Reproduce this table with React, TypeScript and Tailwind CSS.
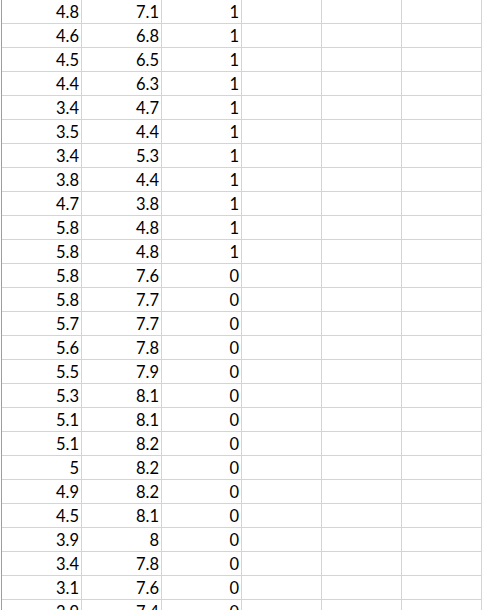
const rows: [string, string, string][] = [
  ["4.8", "7.1", "1"],
  ["4.6", "6.8", "1"],
  ["4.5", "6.5", "1"],
  ["4.4", "6.3", "1"],
  ["3.4", "4.7", "1"],
  ["3.5", "4.4", "1"],
  ["3.4", "5.3", "1"],
  ["3.8", "4.4", "1"],
  ["4.7", "3.8", "1"],
  ["5.8", "4.8", "1"],
  ["5.8", "4.8", "1"],
  ["5.8", "7.6", "0"],
  ["5.8", "7.7", "0"],
  ["5.7", "7.7", "0"],
  ["5.6", "7.8", "0"],
  ["5.5", "7.9", "0"],
  ["5.3", "8.1", "0"],
  ["5.1", "8.1", "0"],
  ["5.1", "8.2", "0"],
  ["5", "8.2", "0"],
  ["4.9", "8.2", "0"],
  ["4.5", "8.1", "0"],
  ["3.9", "8", "0"],
  ["3.4", "7.8", "0"],
  ["3.1", "7.6", "0"],
  ["2.9", "7.4", "0"],
];

function Cell({ value }: { value?: string }) {
  return (
    <div className="h-[24px] w-[80px] shrink-0 border-b border-r border-[#d4d4d4] pr-[2px] text-right leading-[24px] text-[16.5px] text-black">
      {value}
    </div>
  );
}

export default function App() {
  return (
    <div
      className="flex h-[610px] w-[482px] overflow-hidden bg-white"
      style={{ fontFamily: "Lato, 'Open Sans', sans-serif" }}
    >
      {/* row header edge */}
      <div className="ml-px w-px shrink-0 bg-[#9e9e9e]" />

      {/* sheet cells */}
      <div className="flex flex-col">
        {rows.map((r, i) => (
          <div key={i} className="flex">
            <Cell value={r[0]} />
            <Cell value={r[1]} />
            <Cell value={r[2]} />
            <Cell />
            <Cell />
            <Cell />
          </div>
        ))}
      </div>
    </div>
  );
}
